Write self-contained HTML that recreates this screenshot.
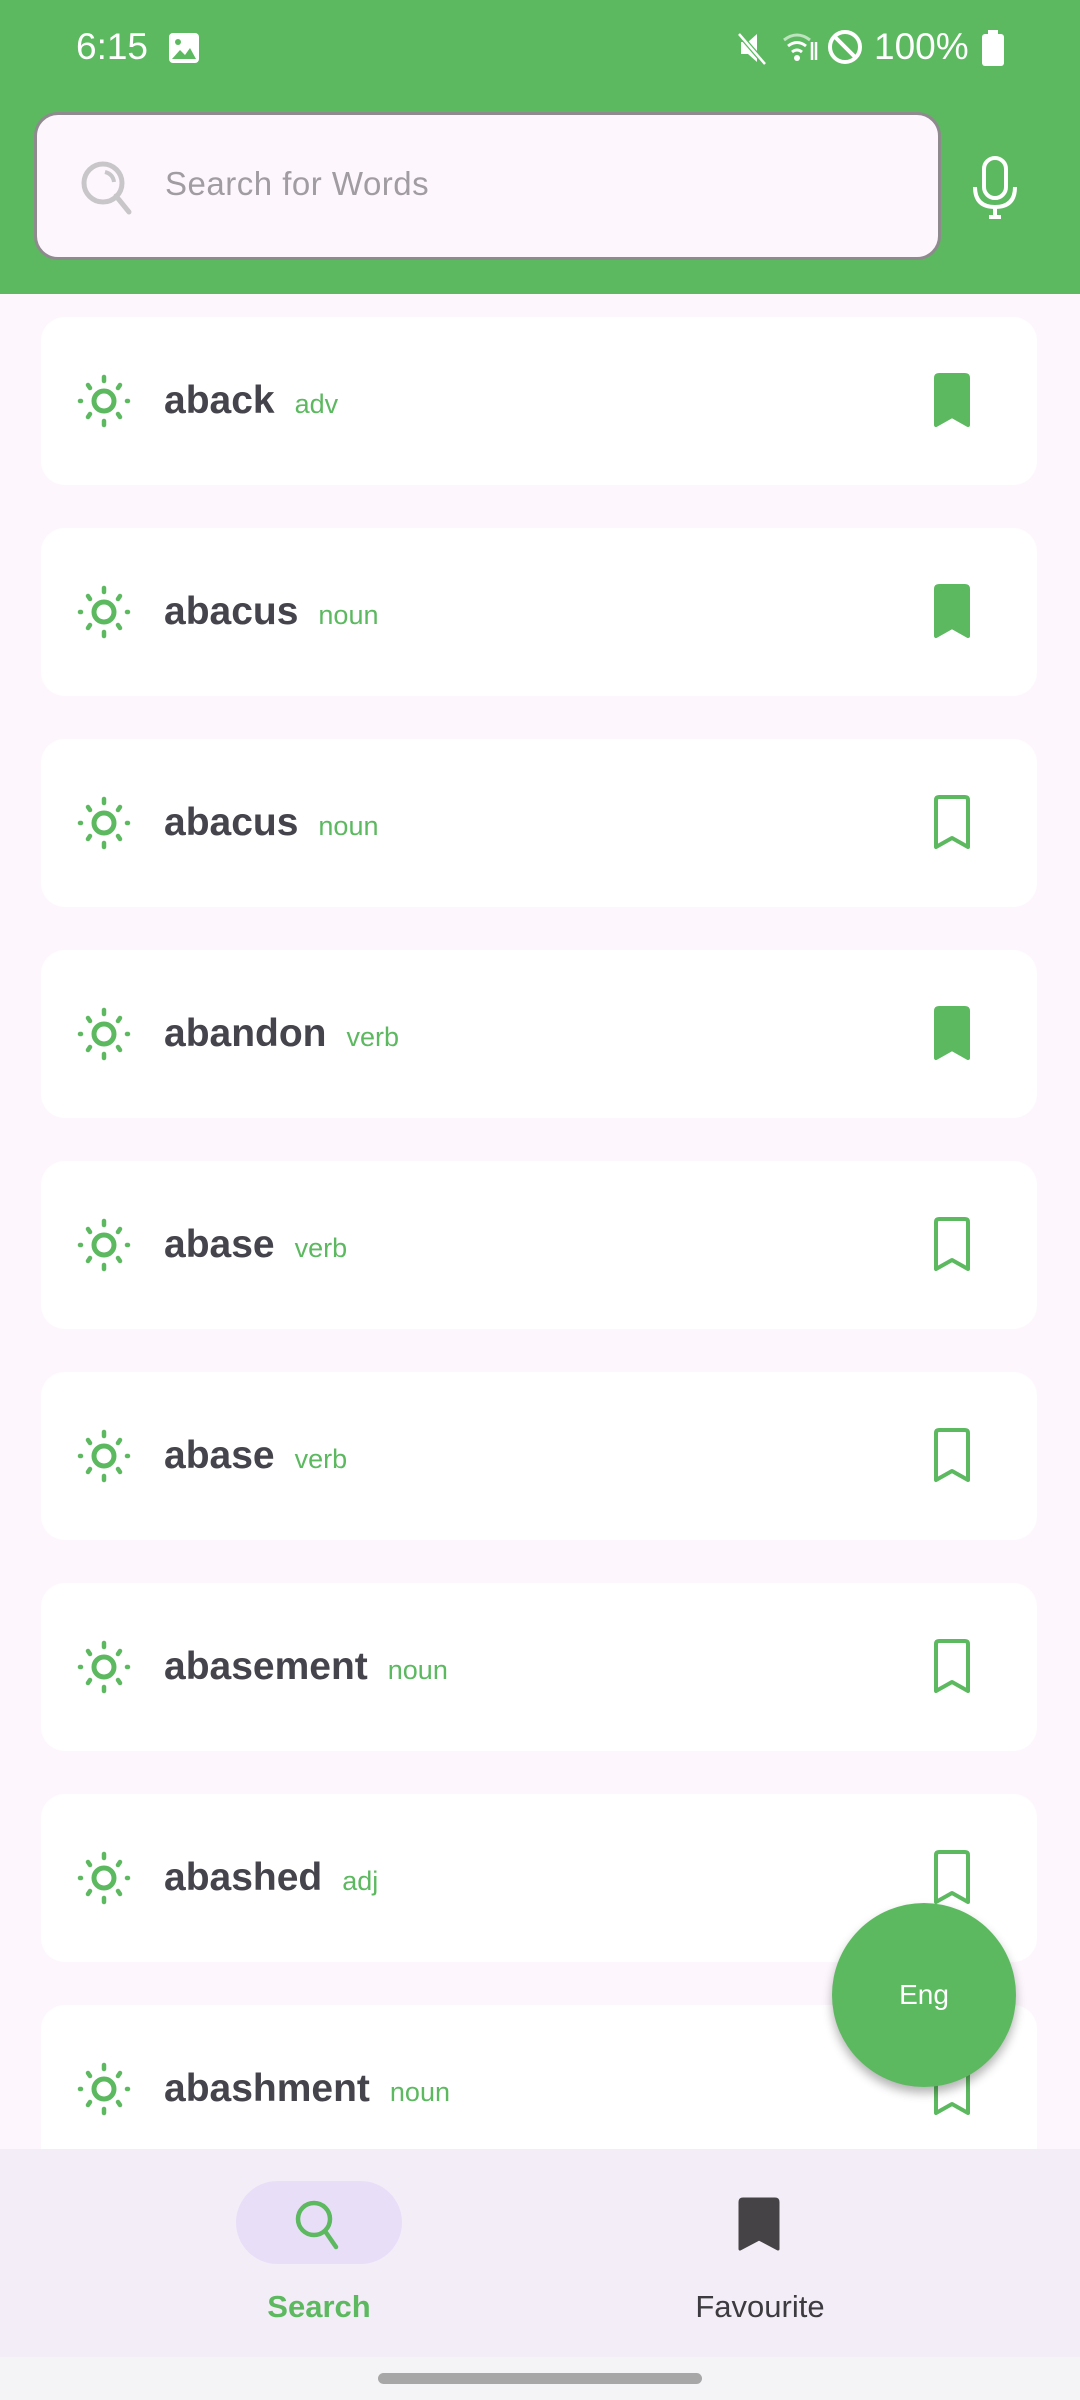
<!DOCTYPE html>
<html><head><meta charset="utf-8"><style>
*{margin:0;padding:0;box-sizing:border-box}
body{width:1080px;height:2400px;position:relative;overflow:hidden;background:#fdf7fd;font-family:"Liberation Sans",sans-serif}
.hdr{position:absolute;left:0;top:0;width:1080px;height:294px;background:#5cb960}
.st{position:absolute;top:26px;color:#fff;font-size:37px}
.sb{position:absolute;left:34px;top:112px;width:907px;height:148px;background:#fdf7fd;border:3px solid #8e8a8e;border-radius:24px}
.sb span{position:absolute;left:128px;top:50px;font-size:33px;color:#a09ca2;letter-spacing:0.5px}
.card{position:absolute;left:41px;width:996px;height:168px;background:#fff;border-radius:24px}
.card .w{position:absolute;left:123px;top:62px;font-size:39px;font-weight:bold;color:#45434b}
.card .p{font-size:27px;font-weight:normal;color:#5cb960;margin-left:20px}
.card svg.sun{position:absolute;left:36px;top:57px}
.card svg.bm{position:absolute;left:888px;top:56px}
.nav{position:absolute;left:0;top:2149px;width:1080px;height:208px;background:#f3edf7}
.gb{position:absolute;left:0;top:2357px;width:1080px;height:43px;background:#f4f3f6}
.fab{position:absolute;left:832px;top:1903px;width:184px;height:184px;border-radius:50%;background:#5cb960;box-shadow:0 6px 10px rgba(0,0,0,.3);color:#fff;font-size:28px;text-align:center;line-height:184px}
</style></head><body>
<div class="hdr">
<div class="st" style="left:76px">6:15</div>
<svg style="position:absolute;left:167px;top:31px" width="34" height="34" viewBox="0 0 34 34"><rect x="2" y="2" width="30" height="30" rx="4" fill="#fff"/><circle cx="11" cy="11" r="3" fill="#5cb960"/><path d="M5 28 L13 19 L18 24 L23 17 L29 28Z" fill="#5cb960"/></svg>
<svg style="position:absolute;left:735px;top:30px" width="36" height="36" viewBox="0 0 36 36"><path d="M6 12h7l9-8v28l-9-8H6z" fill="#fff"/><path d="M4 4 L30 34" stroke="#5cb960" stroke-width="5"/><path d="M4 4 L30 34" stroke="#fff" stroke-width="2.5"/></svg>
<svg style="position:absolute;left:782px;top:30px" width="40" height="36" viewBox="0 0 40 36"><path d="M2 10 Q15 0 28 10" stroke="#fff" stroke-width="3" fill="none" opacity=".6"/><path d="M6 16 Q15 9 24 16" stroke="#fff" stroke-width="3" fill="none"/><path d="M10 22 Q15 18 20 22" stroke="#fff" stroke-width="3" fill="none"/><circle cx="15" cy="28" r="3" fill="#fff"/><path d="M30 12v18M34 30V12" stroke="#fff" stroke-width="2.5"/></svg>
<svg style="position:absolute;left:826px;top:28px" width="38" height="38" viewBox="0 0 38 38"><circle cx="19" cy="19" r="15" stroke="#fff" stroke-width="4" fill="none"/><path d="M9 9L29 29" stroke="#fff" stroke-width="4"/></svg>
<div class="st" style="left:874px">100%</div>
<svg style="position:absolute;left:980px;top:30px" width="26" height="36" viewBox="0 0 26 36"><rect x="8" y="0" width="10" height="4" fill="#fff"/><rect x="2" y="4" width="22" height="32" rx="3" fill="#fff"/></svg>
<div class="sb">
<svg style="position:absolute;left:42px;top:44px" width="58" height="58" viewBox="0 0 58 58"><circle cx="24" cy="24" r="19" stroke="#c8c6c9" stroke-width="5" fill="none"/><path d="M37 37 L50 53" stroke="#c8c6c9" stroke-width="5" stroke-linecap="round"/><path d="M26 13 Q34 15 35 23" stroke="#c8c6c9" stroke-width="4" fill="none"/></svg>
<span>Search for Words</span></div>
<svg style="position:absolute;left:972px;top:155px" width="46" height="66" viewBox="0 0 46 66"><rect x="12" y="3" width="22" height="40" rx="11" stroke="#fff" stroke-width="4" fill="none"/><path d="M3 32 Q3 52 23 52 Q43 52 43 32" stroke="#fff" stroke-width="4" fill="none"/><path d="M23 52v10M17 62h12" stroke="#fff" stroke-width="4"/></svg>
</div>

<div id="list"></div>
<script></script>
<!-- cards -->
<div class="card" style="top:317px"><svg class="sun" width="54" height="54" viewBox="0 0 54 54"><circle cx="27" cy="27" r="10" stroke="#5cb960" stroke-width="5" fill="none"/><g stroke="#5cb960" stroke-width="4.5" stroke-linecap="round"><path d="M27 3v4M27 47v4M3 27h1M50 27h1M11 11l2 3M43 11l-2 3M11 43l2-3M43 43l-2-3"/></g></svg><div class="w">aback<span class="p">adv</span></div><svg class="bm" width="60" height="58" viewBox="0 0 60 58"><path d="M7 5 Q7 2 10 2 H36 Q39 2 39 5 V52 L23 43 L7 52Z" fill="#5cb960" stroke="#5cb960" stroke-width="4" stroke-linejoin="round"/></svg></div>
<div class="card" style="top:528px"><svg class="sun" width="54" height="54" viewBox="0 0 54 54"><circle cx="27" cy="27" r="10" stroke="#5cb960" stroke-width="5" fill="none"/><g stroke="#5cb960" stroke-width="4.5" stroke-linecap="round"><path d="M27 3v4M27 47v4M3 27h1M50 27h1M11 11l2 3M43 11l-2 3M11 43l2-3M43 43l-2-3"/></g></svg><div class="w">abacus<span class="p">noun</span></div><svg class="bm" width="60" height="58" viewBox="0 0 60 58"><path d="M7 5 Q7 2 10 2 H36 Q39 2 39 5 V52 L23 43 L7 52Z" fill="#5cb960" stroke="#5cb960" stroke-width="4" stroke-linejoin="round"/></svg></div>
<div class="card" style="top:739px"><svg class="sun" width="54" height="54" viewBox="0 0 54 54"><circle cx="27" cy="27" r="10" stroke="#5cb960" stroke-width="5" fill="none"/><g stroke="#5cb960" stroke-width="4.5" stroke-linecap="round"><path d="M27 3v4M27 47v4M3 27h1M50 27h1M11 11l2 3M43 11l-2 3M11 43l2-3M43 43l-2-3"/></g></svg><div class="w">abacus<span class="p">noun</span></div><svg class="bm" width="60" height="58" viewBox="0 0 60 58"><path d="M7 5 Q7 2 10 2 H36 Q39 2 39 5 V52 L23 43 L7 52Z" fill="none" stroke="#5cb960" stroke-width="4" stroke-linejoin="round"/></svg></div>
<div class="card" style="top:950px"><svg class="sun" width="54" height="54" viewBox="0 0 54 54"><circle cx="27" cy="27" r="10" stroke="#5cb960" stroke-width="5" fill="none"/><g stroke="#5cb960" stroke-width="4.5" stroke-linecap="round"><path d="M27 3v4M27 47v4M3 27h1M50 27h1M11 11l2 3M43 11l-2 3M11 43l2-3M43 43l-2-3"/></g></svg><div class="w">abandon<span class="p">verb</span></div><svg class="bm" width="60" height="58" viewBox="0 0 60 58"><path d="M7 5 Q7 2 10 2 H36 Q39 2 39 5 V52 L23 43 L7 52Z" fill="#5cb960" stroke="#5cb960" stroke-width="4" stroke-linejoin="round"/></svg></div>
<div class="card" style="top:1161px"><svg class="sun" width="54" height="54" viewBox="0 0 54 54"><circle cx="27" cy="27" r="10" stroke="#5cb960" stroke-width="5" fill="none"/><g stroke="#5cb960" stroke-width="4.5" stroke-linecap="round"><path d="M27 3v4M27 47v4M3 27h1M50 27h1M11 11l2 3M43 11l-2 3M11 43l2-3M43 43l-2-3"/></g></svg><div class="w">abase<span class="p">verb</span></div><svg class="bm" width="60" height="58" viewBox="0 0 60 58"><path d="M7 5 Q7 2 10 2 H36 Q39 2 39 5 V52 L23 43 L7 52Z" fill="none" stroke="#5cb960" stroke-width="4" stroke-linejoin="round"/></svg></div>
<div class="card" style="top:1372px"><svg class="sun" width="54" height="54" viewBox="0 0 54 54"><circle cx="27" cy="27" r="10" stroke="#5cb960" stroke-width="5" fill="none"/><g stroke="#5cb960" stroke-width="4.5" stroke-linecap="round"><path d="M27 3v4M27 47v4M3 27h1M50 27h1M11 11l2 3M43 11l-2 3M11 43l2-3M43 43l-2-3"/></g></svg><div class="w">abase<span class="p">verb</span></div><svg class="bm" width="60" height="58" viewBox="0 0 60 58"><path d="M7 5 Q7 2 10 2 H36 Q39 2 39 5 V52 L23 43 L7 52Z" fill="none" stroke="#5cb960" stroke-width="4" stroke-linejoin="round"/></svg></div>
<div class="card" style="top:1583px"><svg class="sun" width="54" height="54" viewBox="0 0 54 54"><circle cx="27" cy="27" r="10" stroke="#5cb960" stroke-width="5" fill="none"/><g stroke="#5cb960" stroke-width="4.5" stroke-linecap="round"><path d="M27 3v4M27 47v4M3 27h1M50 27h1M11 11l2 3M43 11l-2 3M11 43l2-3M43 43l-2-3"/></g></svg><div class="w">abasement<span class="p">noun</span></div><svg class="bm" width="60" height="58" viewBox="0 0 60 58"><path d="M7 5 Q7 2 10 2 H36 Q39 2 39 5 V52 L23 43 L7 52Z" fill="none" stroke="#5cb960" stroke-width="4" stroke-linejoin="round"/></svg></div>
<div class="card" style="top:1794px"><svg class="sun" width="54" height="54" viewBox="0 0 54 54"><circle cx="27" cy="27" r="10" stroke="#5cb960" stroke-width="5" fill="none"/><g stroke="#5cb960" stroke-width="4.5" stroke-linecap="round"><path d="M27 3v4M27 47v4M3 27h1M50 27h1M11 11l2 3M43 11l-2 3M11 43l2-3M43 43l-2-3"/></g></svg><div class="w">abashed<span class="p">adj</span></div><svg class="bm" width="60" height="58" viewBox="0 0 60 58"><path d="M7 5 Q7 2 10 2 H36 Q39 2 39 5 V52 L23 43 L7 52Z" fill="none" stroke="#5cb960" stroke-width="4" stroke-linejoin="round"/></svg></div>
<div class="card" style="top:2005px"><svg class="sun" width="54" height="54" viewBox="0 0 54 54"><circle cx="27" cy="27" r="10" stroke="#5cb960" stroke-width="5" fill="none"/><g stroke="#5cb960" stroke-width="4.5" stroke-linecap="round"><path d="M27 3v4M27 47v4M3 27h1M50 27h1M11 11l2 3M43 11l-2 3M11 43l2-3M43 43l-2-3"/></g></svg><div class="w">abashment<span class="p">noun</span></div><svg class="bm" width="60" height="58" viewBox="0 0 60 58"><path d="M7 5 Q7 2 10 2 H36 Q39 2 39 5 V52 L23 43 L7 52Z" fill="none" stroke="#5cb960" stroke-width="4" stroke-linejoin="round"/></svg></div>

<div class="fab">Eng</div>

<div class="nav">
<div style="position:absolute;left:236px;top:32px;width:166px;height:83px;border-radius:42px;background:#e8def8"></div>
<svg style="position:absolute;left:288px;top:46px" width="60" height="60" viewBox="0 0 60 60"><circle cx="26" cy="24" r="16" stroke="#5cb960" stroke-width="4.5" fill="none"/><path d="M37 36 L48 52" stroke="#5cb960" stroke-width="4.5" stroke-linecap="round"/></svg>
<div style="position:absolute;left:236px;top:140px;width:166px;text-align:center;font-size:31px;font-weight:bold;color:#5cb960">Search</div>
<svg style="position:absolute;left:738px;top:48px" width="44" height="56" viewBox="0 0 44 56"><path d="M2 5 Q2 2 5 2 H37 Q40 2 40 5 V52 L21 42 L2 52Z" fill="#454346" stroke="#454346" stroke-width="3" stroke-linejoin="round"/></svg>
<div style="position:absolute;left:620px;top:140px;width:280px;text-align:center;font-size:31px;color:#3d3b40">Favourite</div>
</div>
<div class="gb"><div style="position:absolute;left:378px;top:16px;width:324px;height:11px;border-radius:6px;background:#a7a7a7"></div></div>
</body></html>
